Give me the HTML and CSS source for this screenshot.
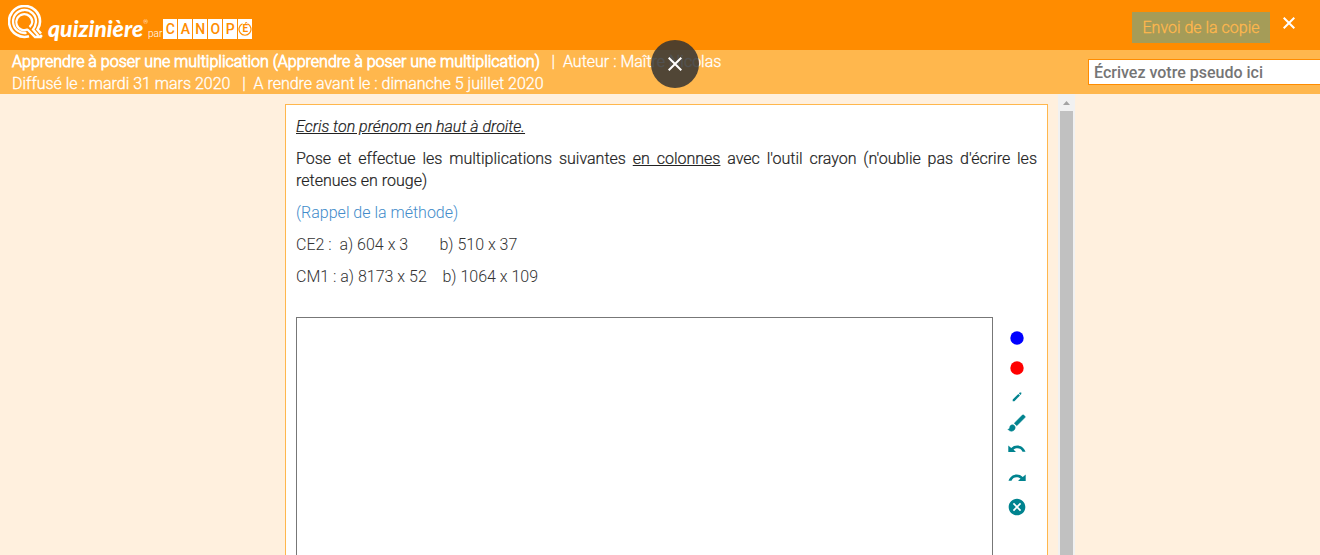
FILE: index.html
```html
<!DOCTYPE html>
<html lang="fr">
<head>
<meta charset="utf-8">
<title>Quizinière</title>
<link rel="stylesheet" href="styles.css">
</head>
<body>
<header class="topbar">
  <a class="brand" href="#" aria-label="Quizinière par Canopé">
    <svg class="brand-mark" width="36" height="36" viewBox="0 0 36 36" fill="none" stroke="#fff" aria-hidden="true">
      <path d="M21 31.300A15.500 15.500 0 1 1 32 17Q32 21 29.500 24.500L33 28.500" stroke-width="2.600"/>
      <path d="M18.500 27.800A11.500 11.500 0 1 1 28 17Q27.500 21.500 25 24.500L31.500 32H27L19.500 24.500" stroke-width="2.300"/>
      <path d="M20 24.300A8 8 0 1 1 24.300 17Q24 20 21.500 22" stroke-width="2.300"/>
      <circle cx="33" cy="31" r="1.500" fill="#fff" stroke="none"/>
    </svg>
    <span class="brand-name">quizinière</span><span class="brand-reg">®</span>
    <span class="brand-by">par</span>
    <span class="canope"><span>C</span><span>A</span><span>N</span><span>O</span><span>P</span><span class="canope-e">É<svg width="14" height="20" viewBox="0 0 14 20" aria-hidden="true"><path d="M4.500 4.800A6 6 0 1 0 9.500 4.800" fill="none" stroke="#ff8c00" stroke-width="1.200"/></svg></span></span>
  </a>
  <div class="top-actions">
    <button class="send" type="button" disabled>Envoi de la copie</button>
    <button class="close" type="button" aria-label="Fermer">
      <svg width="12" height="12" viewBox="0 0 12 12" stroke="#fff" stroke-width="2"><path d="M.7.7l10.600 10.600M11.300.7L.7 11.300"/></svg>
    </button>
  </div>
</header>
<section class="infobar">
  <div class="info">
    <div><strong>Apprendre à poser une multiplication (Apprendre à poser une multiplication)</strong> &nbsp; | &nbsp;Auteur : Maître Nicolas</div>
    <div>Diffusé le : mardi 31 mars 2020 &nbsp; | &nbsp;A rendre avant le : dimanche 5 juillet 2020</div>
  </div>
  <input class="pseudo" type="text" placeholder="Écrivez votre pseudo ici" aria-label="Écrivez votre pseudo ici">
</section>
<button class="overlay-close" type="button" aria-label="Quitter le plein écran">
  <svg width="14" height="14" viewBox="0 0 14 14" stroke="#fff" stroke-width="2"><path d="M.7.7l12.600 12.600M13.300.7L.7 13.300"/></svg>
</button>
<main class="stage">
  <article class="card">
    <p class="dark"><em class="underline">Ecris ton prénom en haut à droite.</em></p>
    <p class="dark justify">Pose et effectue les multiplications suivantes <span class="underline">en colonnes</span> avec l'outil crayon (n'oublie pas d'écrire les retenues en rouge)</p>
    <p><a href="#">(Rappel de la méthode)</a></p>
    <p>CE2 : &nbsp;a) 604 x 3 &nbsp; &nbsp; &nbsp; &nbsp;b) 510 x 37</p>
    <p>CM1 : a) 8173 x 52 &nbsp; &nbsp;b) 1064 x 109</p>
    <div class="drawing">
      <canvas class="sheet"></canvas>
      <div class="tools">
        <button class="colour" type="button" aria-label="Bleu"><svg viewBox="0 0 20 20"><circle cx="10" cy="10" r="6.700" fill="#00f"/></svg></button>
        <button class="colour" type="button" aria-label="Rouge"><svg viewBox="0 0 20 20"><circle cx="10" cy="10" r="6.700" fill="red"/></svg></button>
        <button class="pen" type="button" aria-label="Trait fin"><svg viewBox="0 0 20 20"><path d="M5.700 12.500L11.300 6.900 13 8.600 7.400 14.200H5.700zM11.900 6.300L12.800 5.400H14.300V7L13.500 7.900z"/></svg></button>
        <button class="pen" type="button" aria-label="Pinceau"><svg viewBox="1 1 22 22"><path d="M7 14c-1.660 0-3 1.340-3 3 0 1.310-1.160 2-2 2 .920 1.220 2.490 2 4 2 2.210 0 4-1.790 4-4 0-1.660-1.340-3-3-3zm13.710-9.370l-1.340-1.340a1 1 0 0 0-1.410 0L9 12.250 11.750 15l8.960-8.960a1 1 0 0 0 0-1.410z" stroke="#00838f" stroke-width=".6"/></svg></button>
        <button type="button" aria-label="Annuler"><svg viewBox="0 0 20 20"><path d="M1.300 6.500L4.200 9C8.500 4.800 16 6 18.500 12.700H15.500C14 8.800 9.500 8.300 6.500 10.600L9 12.900H1.300z"/></svg></button>
        <button type="button" aria-label="Rétablir"><svg viewBox="0 0 20 20"><path d="M18.700 6.500L15.800 9C11.500 4.800 4 6 1.500 12.700H4.500C6 8.800 10.500 8.300 13.500 10.600L11 12.900H18.700z"/></svg></button>
        <button type="button" aria-label="Effacer"><svg viewBox="0 0 24 24"><path d="M12 2C6.470 2 2 6.470 2 12s4.470 10 10 10 10-4.470 10-10S17.530 2 12 2zm5 13.590L15.590 17 12 13.410 8.410 17 7 15.590 10.590 12 7 8.410 8.410 7 12 10.590 15.590 7 17 8.410 13.410 12 17 15.590z"/></svg></button>
      </div>
    </div>
  </article>
  <div class="scrollbar" aria-hidden="true">
    <svg width="17" height="17" viewBox="0 0 17 17" fill="#a3a3a3"><path d="M5 11L8.500 7L12 11z"/></svg>
    <div class="thumb"></div>
  </div>
</main>
</body>
</html>
```
FILE: styles.css
```css
* { box-sizing: border-box; }
html, body { height: 100%; }
body {
  margin: 0;
  display: flex;
  flex-direction: column;
  overflow: hidden;
  background: #fff0de;
  color: #333;
  font: 300 16px/22px Roboto, "Liberation Sans", sans-serif;
}
button { border: 0; padding: 0; background: none; font: inherit; cursor: pointer; }
svg { display: block; }

.topbar {
  flex: none;
  display: flex;
  justify-content: space-between;
  align-items: flex-start;
  height: 50px;
  padding-left: 8px;
  padding-right: 25px;
  background: #ff8c00;
}
.brand { display: flex; align-items: flex-start; padding-top: 5px; color: #fff; text-decoration: none; }
.brand-name { margin-left: 4px; padding-top: 10px; font: italic 900 23px/26px Lato, sans-serif; }
.brand-reg { padding-top: 13px; font-size: 6px; line-height: 8px; }
.brand-by { padding-top: 21px; font-size: 10px; line-height: 16px; }
.canope { display: flex; gap: 1px; margin-left: 1px; margin-top: 14px; }
.canope span {
  position: relative;
  width: 14px;
  height: 20px;
  background: #fff;
  color: #ff8c00;
  text-align: center;
  font-size: 14px;
  line-height: 20px;
  font-weight: 500;
}
.canope .canope-e { font-size: 10px; line-height: 19px; font-weight: 700; }
.canope-e svg { position: absolute; inset: 0; }

.top-actions { display: flex; align-items: flex-start; gap: 13px; padding-top: 12px; }
.send { min-width: 138px; height: 31px; padding: 0 10px; background: #a59c58; color: #ffb74d; -webkit-text-stroke: .3px; }
.close { padding-top: 5px; }

.infobar {
  flex: none;
  display: flex;
  justify-content: space-between;
  align-items: flex-start;
  height: 44px;
  padding-left: 12px;
  background: #ffb74d;
  color: #fff;
}
.info { padding-top: 1px; -webkit-text-stroke: .3px; }
.info strong { font-weight: 300; -webkit-text-stroke: .8px; }
.pseudo {
  width: 232px;
  height: 26px;
  margin-top: 9px;
  padding: 0 5px;
  border: 1px solid #ff8c00;
  border-right: 0;
  font: 500 16px/22px Roboto, "Liberation Sans", sans-serif;
}
.pseudo::placeholder { color: #757575; opacity: 1; }

.overlay-close {
  position: absolute;
  top: 40px;
  left: calc(50% - 9px);
  display: flex;
  align-items: center;
  justify-content: center;
  width: 48px;
  height: 48px;
  border-radius: 50%;
  background: rgba(51, 51, 51, .85);
}

.stage {
  flex: 1;
  min-height: 0;
  display: flex;
  width: 100%;
  max-width: 830px;
  margin: 0 auto;
  padding-left: 40px;
}
.card {
  flex: 1;
  display: flex;
  flex-direction: column;
  gap: 10px;
  margin: 10px 10px 0 0;
  padding: 11px 10px 0;
  border: 1px solid #ffb74d;
  border-bottom: 0;
  background: #fff;
}
.card p { margin: 0; }
.card .dark { color: #222; -webkit-text-stroke: .2px; }
.underline { text-decoration: underline; }
.justify { text-align: justify; }
.card a { color: #428bca; text-decoration: none; }
.drawing { flex: 1; display: flex; gap: 14px; margin-top: 19px; min-height: 0; }
.sheet { flex: 1; min-width: 0; border: 1px solid #777; border-bottom: 0; }
.tools { display: flex; flex-direction: column; gap: 9px; padding-top: 10px; padding-right: 10px; }
.tools button { height: 20px; flex: none; }
.tools .colour { height: 21px; }
.tools .pen { height: 17px; }
.tools svg { width: 20px; height: 20px; fill: #00838f; }

.scrollbar { flex: none; display: flex; flex-direction: column; width: 17px; background: #f1f1f1; }
.thumb { flex: 1; margin: 0 2px; background: #c1c1c1; }
```
